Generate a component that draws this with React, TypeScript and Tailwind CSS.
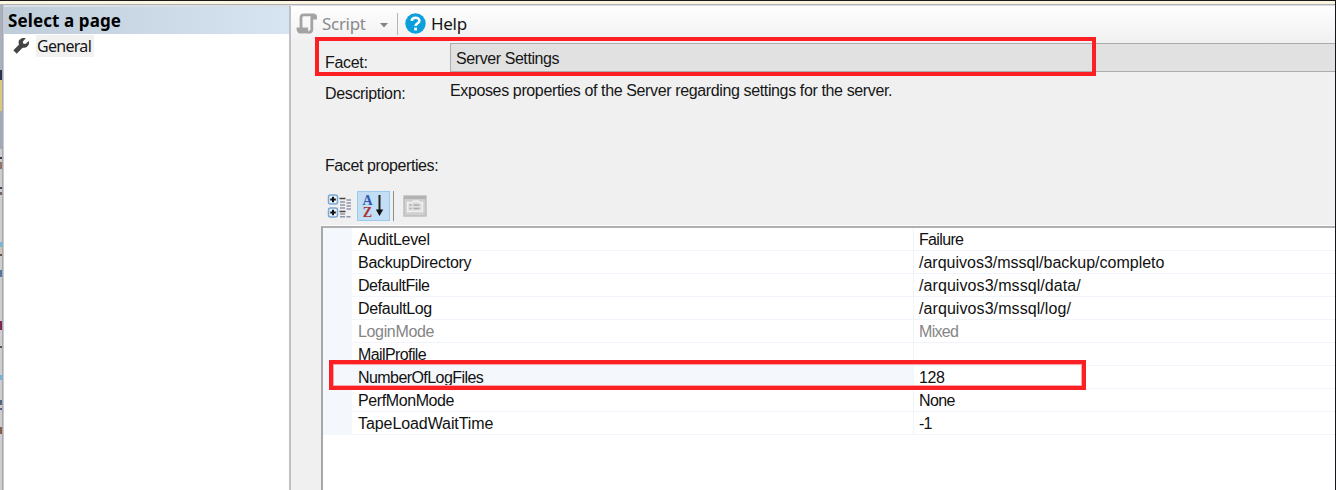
import React from "react";

type Property = {
  name: string;
  nameClass: string;
  value: string;
  valueClass: string;
  readOnly?: boolean;
  selected?: boolean;
};

const properties: Property[] = [
  { name: "AuditLevel", nameClass: "tracking-[-0.3px]", value: "Failure", valueClass: "tracking-[-0.65px]" },
  { name: "BackupDirectory", nameClass: "tracking-[-0.27px]", value: "/arquivos3/mssql/backup/completo", valueClass: "tracking-[0px]" },
  { name: "DefaultFile", nameClass: "tracking-[-0.45px]", value: "/arquivos3/mssql/data/", valueClass: "tracking-[0.08px]" },
  { name: "DefaultLog", nameClass: "tracking-[-0.35px]", value: "/arquivos3/mssql/log/", valueClass: "tracking-[0.08px]" },
  { name: "LoginMode", nameClass: "tracking-[-0.35px]", value: "Mixed", valueClass: "tracking-[-0.7px]", readOnly: true },
  { name: "MailProfile", nameClass: "tracking-[-0.6px]", value: "", valueClass: "" },
  { name: "NumberOfLogFiles", nameClass: "tracking-[-0.57px]", value: "128", valueClass: "tracking-[-0.4px]", selected: true },
  { name: "PerfMonMode", nameClass: "tracking-[-0.4px]", value: "None", valueClass: "tracking-[-0.6px]" },
  { name: "TapeLoadWaitTime", nameClass: "tracking-[-0.08px]", value: "-1", valueClass: "tracking-[-0.9px]" },
];

function WrenchIcon() {
  return (
    <svg width="18" height="18" viewBox="0 0 18 18" className="shrink-0">
      <path d="M3 15 9.500 8.500" stroke="#444" strokeWidth="4.600" />
      <path d="M13.800 1.200C10.500 0.300 6.600 1.800 6.600 5.600c0 3.400 2.600 5.500 5.800 5.200 3.400-.4 5.300-3.600 4.500-6.700l-3.500 3-2.300-.5-.3-2.200z" fill="#444" />
    </svg>
  );
}

function ScriptIcon() {
  return (
    <svg width="22" height="22" viewBox="0 0 22 22" className="shrink-0" fill="none" stroke="#a3a3a3">
      <path d="M5 15V4.500C5 2.500 6.200 1.800 8 1.800H18.500C16.500 1.800 15.800 3.300 15.800 5V16.500C15.800 18.500 14.500 19.300 12.500 19.300" strokeWidth="2.800" />
      <path d="M15 1H18.500C20.200 1 21 2.200 21 4V6.400H15Z" fill="#a3a3a3" stroke="none" />
      <path d="M0.500 14.500H12C12 17 12.300 19 14 20.600H4.500C2.200 20.600 0.500 18.500 0.500 14.500Z" fill="#a3a3a3" stroke="none" />
    </svg>
  );
}

function HelpIcon() {
  return (
    <svg width="21" height="21" viewBox="0 0 21 21" className="shrink-0">
      <circle cx="10.500" cy="10.500" r="10.200" fill="#0ba0dc" />
      <path d="M6.800 8C6.800 3.600 14.400 3.800 14.400 7.700C14.400 10.300 10.600 10.200 10.600 13" fill="none" stroke="#fff" strokeWidth="2.600" />
      <rect x="9.200" y="14.600" width="2.800" height="2.800" fill="#fff" />
    </svg>
  );
}

function CategorizedIcon() {
  return (
    <svg width="24" height="24" viewBox="0 0 24 24" className="shrink-0">
      {[1, 14].map((y) => (
        <g key={y}>
          <rect x="1.500" y={y} width="9" height="9" rx="2" fill="#e7f2fc" stroke="#7ba6d0" strokeWidth="1.500" />
          <path d={`M3.200 ${y + 4.500}h5.600M6 ${y + 1.700}v5.600`} stroke="#111" strokeWidth="2" />
        </g>
      ))}
      <path d="M12.500 4.500h6M12.500 17.500h6" stroke="#444" strokeWidth="1.400" />
      <path d="M13 8h5M13 11h5M13 14h5M13 20h5M13 22.800h5M19.500 6h4.500M19.500 9h4.500M19.500 12h4.500M19.500 15h4.500M19.500 22.800h4" stroke="#8e96ac" strokeWidth="1.400" />
    </svg>
  );
}

function PagesIcon() {
  return (
    <svg width="24" height="22" viewBox="0 0 24 22" className="shrink-0">
      <rect x="1" y="1" width="22" height="20" fill="#cfcfcf" stroke="#bdbdbd" strokeWidth="1.500" />
      <path d="M1 2.500h22" stroke="#b3b3b3" strokeWidth="3" />
      <path d="M4.500 16.500V7.500H9L10.500 6H15L16.500 7.500H19.500V16.500Z" fill="#dedede" stroke="#f0f0f0" strokeWidth="1.400" />
      <path d="M6.500 10h2M10.500 10h6M6.500 13.500h2M10.500 13.500h6" stroke="#aaa" strokeWidth="1.300" />
    </svg>
  );
}

const fringe = [
  "h-[66px] bg-[#a9b0be]",
  "h-[10px] bg-[#28324f]",
  "h-[31px] bg-[#d9c77e]",
  "h-[38px] bg-[#a0a9ba]",
  "h-[8px] bg-[#cdcdcd]",
  "h-[2px] bg-[#3a3a42]",
  "h-[3px] bg-[#cdcdcd]",
  "h-[7px] bg-[#927464]",
  "h-[18px] bg-[#cdcdcd]",
  "h-[2px] bg-[#454550]",
  "h-[3px] bg-[#cdcdcd]",
  "h-[3px] bg-[#75655d]",
  "h-[47px] bg-[#cdcdcd]",
  "h-[5px] bg-[#6eb7d8]",
  "h-[7px] bg-[#ccc6b5]",
  "h-[2px] bg-[#6b4e4e]",
  "h-[14px] bg-[#cdcdcd]",
  "h-[7px] bg-[#5576a0]",
  "h-[44px] bg-[#cdcdcd]",
  "h-[9px] bg-[#7d2553]",
  "h-[16px] bg-[#cdcdcd]",
  "h-[2px] bg-[#555]",
  "h-[27px] bg-[#cdcdcd]",
  "h-[5px] bg-[#6eb7d8]",
  "h-[20px] bg-[#cdcdcd]",
  "h-[5px] bg-[#526680]",
  "h-[3px] bg-[#cdcdcd]",
  "h-[2px] bg-[#526680]",
  "h-[17px] bg-[#cdcdcd]",
  "h-[7px] bg-[#865e4e]",
  "grow bg-[#cdcdcd]",
];

export default function App() {
  return (
    <div className="relative flex h-[490px] w-[1336px] flex-col overflow-hidden bg-[#f0f0f0] font-['Liberation_Sans',sans-serif] text-[16px] leading-[23px] text-[#161616]">
      <div className="h-px shrink-0 bg-[#1c1820]" />
      <div className="flex min-h-0 grow">
        <div className="flex min-w-0 grow flex-col">
          <div className="h-[3px] shrink-0 bg-[#fdf6de]" />
          <div className="flex min-h-0 grow">
            <div className="flex w-[2px] shrink-0 flex-col">
              {fringe.map((c, i) => (
                <div key={i} className={`shrink-0 ${c}`} />
              ))}
            </div>
            <div className="w-px shrink-0 bg-[#a9aab0]" />
            <div className="w-px shrink-0 bg-[#c8c8cc]" />
            <div className="flex min-w-0 grow flex-col border-t border-[#b0b0b8]">
              <div className="h-px shrink-0 bg-[#dcdce2]" />
              <div className="flex min-h-0 grow">
                <aside className="flex w-[285px] shrink-0 flex-col bg-white">
                  <div className="h-[28px] shrink-0 border-t border-[#d8e0ea] bg-linear-to-r from-[#bfcddb] to-[#d7e4f2] pl-[4px] font-['Noto_Sans',sans-serif] text-[17px] leading-[28px] font-bold tracking-[0.1px] text-black">
                    Select a page
                  </div>
                  <div className="flex h-[24px] items-center pl-[8px]">
                    <WrenchIcon />
                    <span className="ml-[6px] h-[22px] w-[58px] bg-[#f1f1f1] pl-[1px] font-['Noto_Sans',sans-serif] leading-[22px] tracking-[-0.7px]">General</span>
                  </div>
                </aside>
                <main className="flex min-w-0 grow flex-col border-l-2 border-[#bfc0c5]">
                  <div className="flex h-[37px] shrink-0 items-start bg-linear-to-b from-[#fefefe] to-[#f0f0f0] pt-[7px] pl-[5px] font-['Noto_Sans',sans-serif]">
                    <ScriptIcon />
                    <span className="ml-[4px] w-[58px] text-[17px] leading-[21px] tracking-[-0.3px] text-[#8a8a8a]">Script</span>
                    <svg width="8" height="5" viewBox="0 0 8 5" className="mt-[10px] shrink-0">
                      <path d="M0 0H8L4 4.500Z" fill="#858585" />
                    </svg>
                    <div className="ml-[9px] h-[22px] w-px bg-[#b5b5b5]" />
                    <div className="ml-[7px] flex">
                      <HelpIcon />
                      <span className="ml-[5px] text-[17px] leading-[21px] tracking-[-0.3px] text-[#151515]">Help</span>
                    </div>
                  </div>
                  <div className="flex h-[29px] shrink-0 pl-[34px]">
                    <span className="mt-[8px] w-[125px] shrink-0 leading-[23px] tracking-[-0.3px]">Facet:</span>
                    <div className="grow border-y border-l border-[#adadad] bg-[#e1e1e1] pl-[5px] leading-[29px] tracking-[-0.42px]">Server Settings</div>
                  </div>
                  <div className="flex h-[82px] shrink-0 pl-[34px]">
                    <span className="mt-[10px] w-[125px] shrink-0 tracking-[-0.35px]">Description:</span>
                    <span className="mt-[7px] tracking-[-0.37px]">Exposes properties of the Server regarding settings for the server.</span>
                  </div>
                  <div className="h-[37px] shrink-0 pl-[34px] tracking-[-0.4px]">Facet properties:</div>
                  <div className="flex h-[34px] shrink-0 items-start pl-[36px]">
                    <div className="pt-[3px]"><CategorizedIcon /></div>
                    <div className="ml-[6px] flex h-[30px] w-[33px] border border-[#99c9ed] bg-[#c1def4]">
                      <div className="flex w-[18px] flex-col items-center pt-[3px] pl-[1px] font-['Liberation_Serif',serif] text-[14px] leading-[12px] font-bold">
                        <span className="h-[12px] text-[#3559b0]">A</span>
                        <span className="h-[12px] text-[#ae3333]">Z</span>
                      </div>
                      <svg width="13" height="28" viewBox="18 0 13 28">
                        <path d="M21.500 3v18" stroke="#222" strokeWidth="2" />
                        <path d="M17.800 17.500h7.400L21.500 24Z" fill="#111" />
                      </svg>
                    </div>
                    <div className="ml-[3px] h-[30px] w-px bg-[#8c8c8c]" />
                    <div className="ml-[9px] pt-[4px]"><PagesIcon /></div>
                  </div>
                  <div className="ml-[30px] h-px shrink-0 bg-[#fafafa]" />
                  <div className="ml-[30px] flex grow flex-col border-t-2 border-l-2 border-t-[#b0b0b0] border-l-[#a7a7a7] bg-white">
                    {properties.map((p) => (
                      <div key={p.name} className={`flex h-[23px] shrink-0 leading-[24px] ${p.readOnly ? "text-[#858585]" : "text-[#111]"}`}>
                        <div className="w-[29px] shrink-0 bg-[#f4f7fc]" />
                        <div className={`w-[562px] shrink-0 border-r border-b border-[#f0f4fb] pl-[6px] ${p.selected ? "bg-[#f4f7fc]" : ""} ${p.nameClass}`}>{p.name}</div>
                        <div className={`grow border-b border-[#f0f4fb] pl-[5px] ${p.valueClass}`}>{p.value}</div>
                      </div>
                    ))}
                  </div>
                </main>
              </div>
            </div>
          </div>
        </div>
        <div className="w-px shrink-0 bg-[#15161a]" />
      </div>
      <div className="absolute top-[37px] left-[315px] h-[39px] w-[781px] border-4 border-[#fb2024]" />
      <div className="absolute top-[360px] left-[329px] h-[30px] w-[757px] border-4 border-[#fb2024]">
        <div className="h-full border border-[#fba5a8]" />
      </div>
    </div>
  );
}
